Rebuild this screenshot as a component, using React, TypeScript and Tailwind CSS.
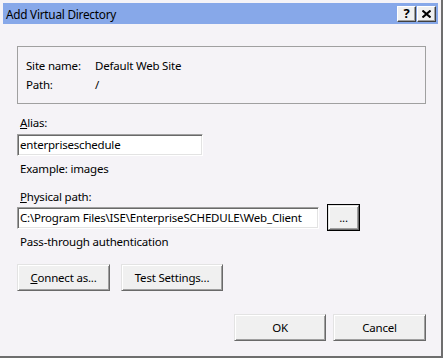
import React from "react";

const font = { fontFamily: '"Noto Sans", "Open Sans", sans-serif' };

function Btn({ children, className = "", def = false }: { children: React.ReactNode; className?: string; def?: boolean }) {
  return (
    <div className={`h-[27px] flex ${def ? "border border-black" : ""} ${className}`}>
      <div className="flex-1 flex items-center justify-center bg-[#f0f0f0] border-t border-l border-t-[#e3e3e3] border-l-[#e3e3e3] border-b border-r border-b-[#696969] border-r-[#696969] shadow-[inset_1px_1px_0_#ffffff,inset_-1px_-1px_0_#a0a0a0] text-[11.5px] tracking-[-0.2px] leading-[16px] text-black">
        {children}
      </div>
    </div>
  );
}

function Input({ value, className = "" }: { value: string; className?: string }) {
  return (
    <div className={`h-[22px] bg-white border-t border-l border-t-[#a0a0a0] border-l-[#a0a0a0] border-b border-r border-b-white border-r-white shadow-[inset_1px_1px_0_#696969,inset_-1px_-1px_0_#e3e3e3] flex items-center pl-[2px] text-[11.5px] tracking-[-0.2px] leading-[16px] text-black whitespace-nowrap overflow-hidden ${className}`}>
      {value}
    </div>
  );
}

export default function App() {
  return (
    <div style={font} className="w-[443px] h-[358px] bg-[#f5f3f7] border-r-2 border-b-2 border-r-[#6e6e6e] border-b-[#6e6e6e] pt-[3px] pl-[3px] pr-[1px] flex flex-col text-black">
      {/* Title bar */}
      <div className="h-[21px] bg-[#87a8e9] flex items-center pl-[3px] pr-[2px] mr-[2px]">
        <span className="text-[11.8px] tracking-[-0.25px] leading-[16px] flex-1 text-black">Add Virtual Directory</span>
        <div className="flex gap-[1px]">
          <div className="w-[19px] h-[16px] bg-[#f0f0f0] border-t border-l border-t-white border-l-white border-b border-r border-b-[#404040] border-r-[#404040] shadow-[inset_-1px_-1px_0_#a0a0a0] flex items-center justify-center text-[13px] font-bold leading-none">?</div>
          <div className="w-[19px] h-[16px] bg-[#f0f0f0] border-t border-l border-t-white border-l-white border-b border-r border-b-[#404040] border-r-[#404040] shadow-[inset_-1px_-1px_0_#a0a0a0] flex items-center justify-center">
            <svg width="9" height="8" viewBox="0 0 9 8">
              <path d="M0.5 0.5 L8.5 7.5 M8.5 0.5 L0.5 7.5" stroke="#000" strokeWidth="2" />
            </svg>
          </div>
        </div>
      </div>

      <div className="pl-[14px] pr-[14px] flex flex-col text-[11.5px] tracking-[-0.2px] leading-[16px]">
        {/* Group box */}
        <div className="mt-[22px] h-[58px] w-[409px] border border-[#a0a0a0] pl-[8px] pt-[11px] flex flex-col gap-[3px]">
          <div className="flex">
            <span className="w-[69px]">Site name:</span>
            <span>Default Web Site</span>
          </div>
          <div className="flex">
            <span className="w-[69px]">Path:</span>
            <span>/</span>
          </div>
        </div>

        <div className="mt-[11px] pl-[3px]"><span className="underline">A</span>lias:</div>
        <Input value="enterpriseschedule" className="mt-[3px] w-[186px]" />
        <div className="mt-[5px] pl-[3px]">Example: images</div>
        <div className="mt-[12px] pl-[3px]"><span className="underline">P</span>hysical path:</div>
        <div className="mt-[-1px] flex items-center h-[27px]">
          <Input value="C:\Program Files\ISE\EnterpriseSCHEDULE\Web_Client" className="w-[302px]" />
          <Btn def className="ml-[8px] w-[33px]">...</Btn>
        </div>
        <div className="mt-[3px] pl-[3px]">Pass-through authentication</div>

        <div className="mt-[14px] flex gap-[11px]">
          <Btn className="w-[93px]"><span><span className="underline">C</span>onnect as...</span></Btn>
          <Btn className="w-[102px]">Test Settings...</Btn>
        </div>

        <div className="mt-[23px] flex justify-end gap-[7px] w-[409px]">
          <Btn className="w-[92px]">OK</Btn>
          <Btn className="w-[93px]">Cancel</Btn>
        </div>
      </div>
    </div>
  );
}
